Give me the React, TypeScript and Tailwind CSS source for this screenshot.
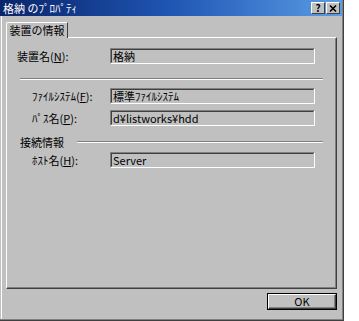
import React from "react";

const font = "font-['Noto_Sans_CJK_JP','Noto_Sans',sans-serif]";

function Field({ value }: { value: string }) {
  return (
    <div className="w-[205px] h-[16px] border border-t-[#808080] border-l-[#808080] border-b-white border-r-white">
      <div className="h-full border border-t-[#404040] border-l-[#404040] border-b-[#c0c0c0] border-r-[#c0c0c0] flex items-center pl-[1px] text-[11px] leading-none text-black">
        {value}
      </div>
    </div>
  );
}

function Row({ label, hot, rest, indent }: { label: string; hot: string; rest?: string; indent: string }) {
  return (
    <div className="flex items-center h-[16px]">
      <div className={`w-[103px] ${indent} text-[11px] leading-none text-black whitespace-nowrap`}>
        {label}(<span className="underline">{hot}</span>):{rest}
      </div>
    </div>
  );
}

function Etched({ className }: { className: string }) {
  return (
    <div className={className}>
      <div className="h-[1px] bg-[#808080]" />
      <div className="h-[1px] bg-white" />
    </div>
  );
}

function TitleButton({ children }: { children: React.ReactNode }) {
  return (
    <div className="w-[14px] h-[12px] bg-[#c0c0c0] border border-t-white border-l-white border-b-[#404040] border-r-[#404040] flex items-center justify-center text-[10px] font-bold leading-none text-black">
      {children}
    </div>
  );
}

export default function App() {
  const rows: { label: string; hot: string; value: string; indent: string; mt: string }[] = [
    { label: "ﾌｧｲﾙｼｽﾃﾑ", hot: "F", value: "標準ﾌｧｲﾙｼｽﾃﾑ", indent: "pl-[25px]", mt: "mt-[8px]" },
    { label: "ﾊﾟｽ名", hot: "P", value: "d¥listworks¥hdd", indent: "pl-[25px]", mt: "mt-[6px]" },
  ];

  return (
    <div className={`w-[359px] h-[321px] bg-white ${font}`}>
      <div className="w-[344px] h-[321px] bg-[#c0c0c0] border-r border-b border-[#404040] flex flex-col">
        <div className="flex-1 flex flex-col border-r border-b border-[#808080]">
          {/* title bar */}
          <div className="h-[16px] bg-gradient-to-r from-[#0a246a] via-[#1f56b4] to-[#5c9ce4] flex items-center pl-[3px] pr-[2px]">
            <span className="text-white text-[11px] leading-none">格納 のﾌﾟﾛﾊﾟﾃｨ</span>
            <div className="ml-auto flex gap-[1px]">
              <TitleButton>?</TitleButton>
              <TitleButton>
                <svg width="8" height="7" viewBox="0 0 8 7">
                  <path d="M1 0.5 L7 6.5 M7 0.5 L1 6.5" stroke="black" strokeWidth="1.6" />
                </svg>
              </TitleButton>
            </div>
          </div>

          {/* body */}
          <div className="flex-1 ml-[1px] border-l border-white pl-[4px] pt-[6px] flex flex-col items-start">
            <div className="relative z-10 w-[62px] h-[16px] -mb-[1px] bg-[#c0c0c0] border-t border-l border-white border-r border-r-[#404040] rounded-tl-[2px] flex items-center justify-center text-[11px] leading-none text-black">
              装置の情報
            </div>
            <div className="w-[331px] h-[252px] border border-t-white border-l-white border-b-[#404040] border-r-[#404040] shadow-[inset_-1px_-1px_0_#808080] flex flex-col">
              <div className="flex items-center mt-[10px]">
                <div className="w-[103px] pl-[10px] text-[11px] leading-none text-black whitespace-nowrap">
                  装置名(<span className="underline">N</span>):
                </div>
                <Field value="格納" />
              </div>

              <Etched className="ml-[13px] w-[303px] mt-[14px]" />

              {rows.map((r) => (
                <div key={r.hot} className={`flex items-center ${r.mt}`}>
                  <Row label={r.label} hot={r.hot} indent={r.indent} />
                  <Field value={r.value} />
                </div>
              ))}

              <div className="ml-[13px] w-[303px] h-[14px] mt-[9px] flex items-center">
                <span className="text-[11px] leading-none text-black whitespace-nowrap">接続情報</span>
                <Etched className="flex-1 ml-[13px]" />
              </div>

              <div className="flex items-center mt-[3px]">
                <Row label="ﾎｽﾄ名" hot="H" indent="pl-[25px]" />
                <Field value="Server" />
              </div>
            </div>

            <div className="ml-[261px] mt-[4px] w-[70px] h-[17px] border border-black">
              <div className="h-full border border-t-white border-l-white border-b-[#404040] border-r-[#404040] shadow-[inset_-1px_-1px_0_#808080] flex items-center justify-center text-[11px] leading-none text-black">
                OK
              </div>
            </div>
          </div>
        </div>
      </div>
    </div>
  );
}
